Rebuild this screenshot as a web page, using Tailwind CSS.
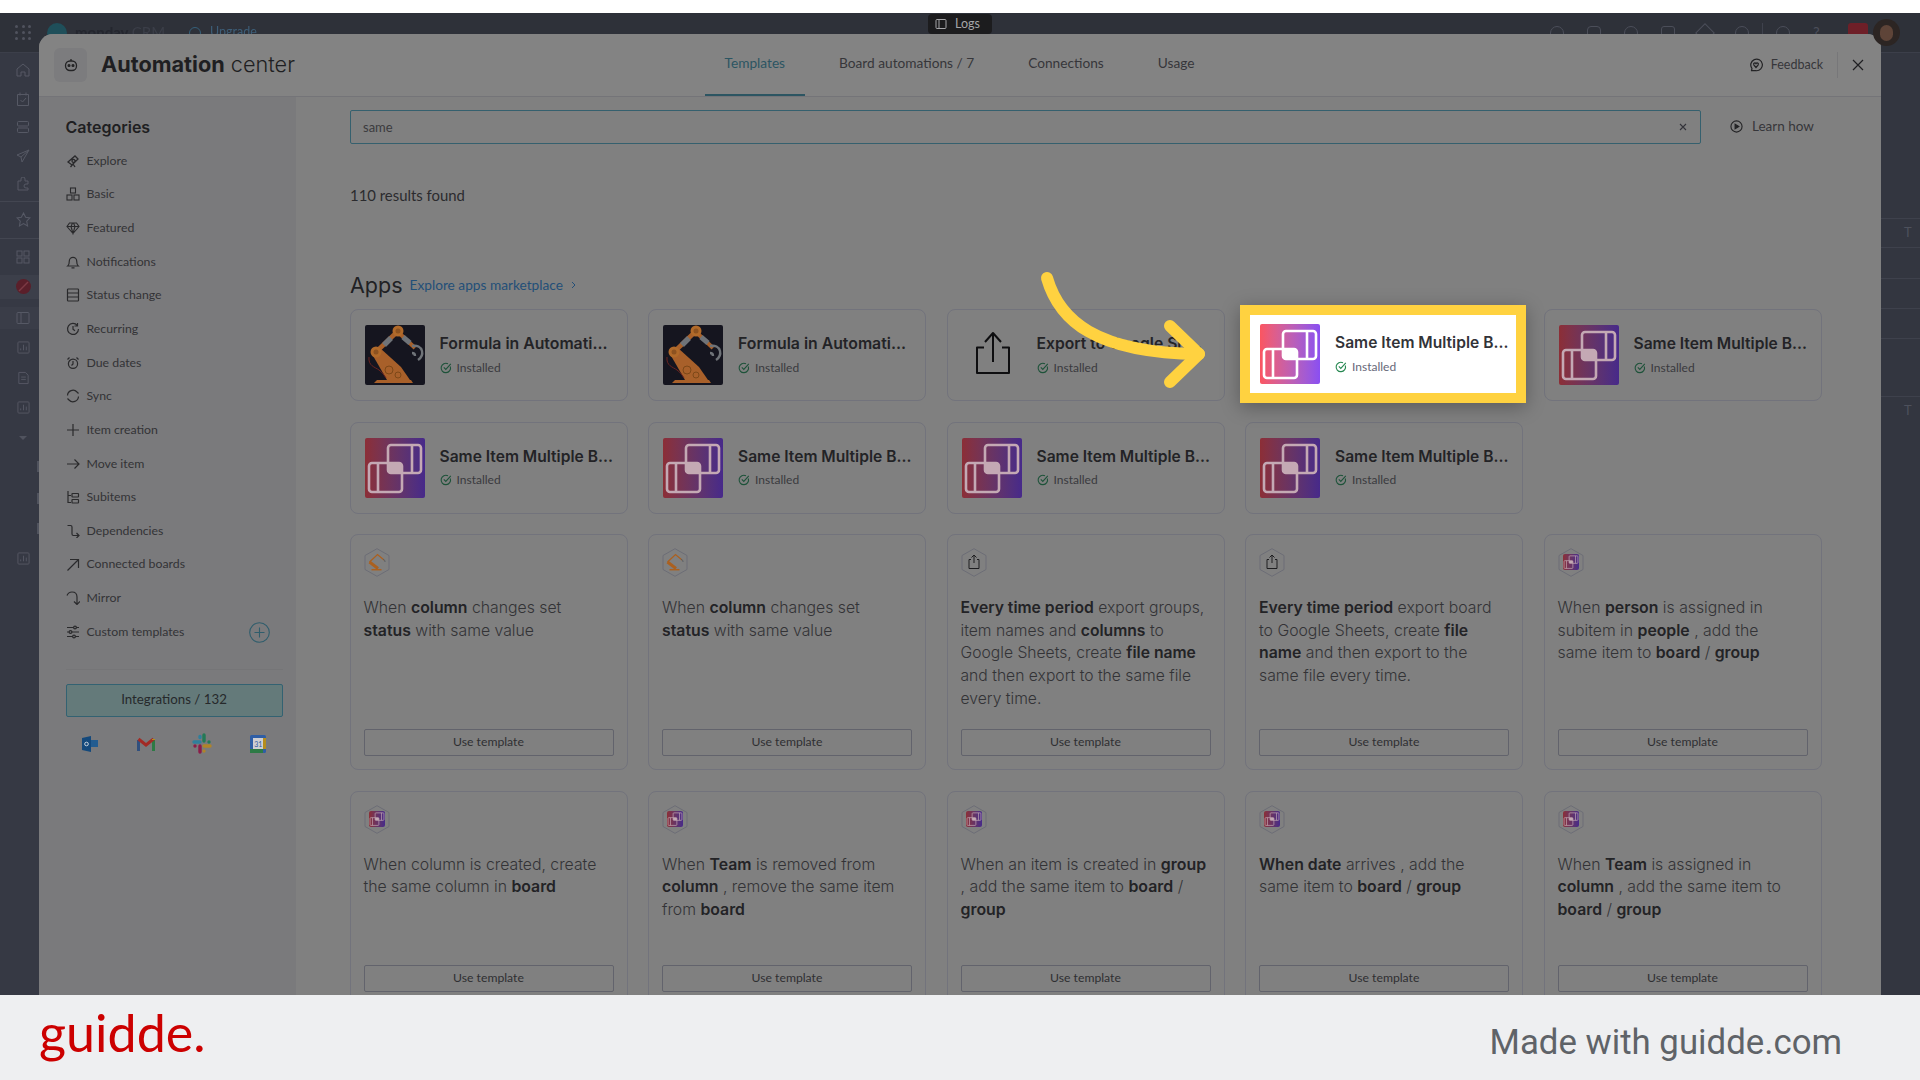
<!DOCTYPE html>
<html lang="en">
<head>
<meta charset="utf-8">
<title>Automation center</title>
<script src="https://cdn.jsdelivr.net/npm/@tailwindcss/browser@4"></script>
</head>
<body class="w-[1920px] h-[1080px] overflow-hidden bg-white flex flex-col font-['Lato',sans-serif]">
<svg class="hidden" width="0" height="0">
  <defs>
    <symbol id="same" viewBox="0 0 60 60">
      <rect x="23" y="7" width="33" height="28" rx="3" fill="none" stroke="currentColor" stroke-width="2.6"/>
      <rect x="4" y="25" width="33" height="29" rx="3" fill="none" stroke="currentColor" stroke-width="2.6"/>
      <path d="M47 7v28M13 25v29" stroke="currentColor" stroke-width="2.6" fill="none"/>
      <rect x="23" y="25" width="14" height="10" rx="2" fill="currentColor"/>
    </symbol>
    <symbol id="robot" viewBox="0 0 60 60">
      <rect width="60" height="60" rx="2" fill="#15151f"/>
      <path d="M9 58l3-3h34l2 3z" fill="#a8602a"/>
      <path d="M7 29l8-6 21 19 9 13H22z" fill="#a8602a"/>
      <path d="M12 26L32 7" stroke="#a8602a" stroke-width="4.500" fill="none"/>
      <path d="M19 20L26 13" stroke="#6f7378" stroke-width="5.500" fill="none"/>
      <path d="M33 7L50 23" stroke="#a8602a" stroke-width="4" fill="none"/>
      <path d="M38 12L45 18" stroke="#6f7378" stroke-width="5" fill="none"/>
      <circle cx="11" cy="27" r="5.500" fill="#b16a2a"/><circle cx="33" cy="6" r="5.500" fill="#b16a2a"/>
      <circle cx="11" cy="27" r="2.500" fill="#8d5220"/><circle cx="33" cy="6" r="2.500" fill="#8d5220"/>
      <circle cx="24" cy="45" r="4" fill="none" stroke="#7d4818"/><circle cx="33" cy="50" r="3" fill="none" stroke="#7d4818"/>
      <path d="M47 21c5-1 9 1 10 5s-1 7-4 9M47 28c2 0 3 1 3 3" stroke="#6f7378" stroke-width="2.400" fill="none"/>
      <path d="M4 32c-1 9 6 10 10 13s5 5 7 8" stroke="#6b2320" fill="none"/>
    </symbol>
    <symbol id="hex" viewBox="0 0 26 29">
      <path d="M13 .7l12 6.800v14L13 28.300 1 21.500V7.500z" fill="none" stroke="#6c6d76"/>
    </symbol>
    <symbol id="hexrobot" viewBox="0 0 26 29">
      <path d="M13 .7l12 6.800v14L13 28.300 1 21.500V7.500z" fill="none" stroke="#6c6d76"/>
      <path d="M5.500 14L13.500 6.500 20 12" fill="none" stroke="#ab601f" stroke-width="1.300"/>
      <path d="M5.500 14L14 20.500" fill="none" stroke="#ab601f" stroke-width="3"/>
      <path d="M7.500 21.700h10" fill="none" stroke="#ab601f" stroke-width="1.500"/>
      <path d="M19 11.500c1.500 0 2 1 2 2.500" fill="none" stroke="#5c5f63" stroke-width="1"/>
    </symbol>
    <symbol id="hexexport" viewBox="0 0 26 29">
      <path d="M13 .7l12 6.800v14L13 28.300 1 21.500V7.500z" fill="none" stroke="#6c6d76"/>
      <path d="M8 11.500h2M16 11.500h2M8 11.500v9h10v-9M13 15V7M10.500 9.500L13 7l2.500 2.500" fill="none" stroke="#1e1e20"/>
    </symbol>
    <symbol id="check" viewBox="0 0 12 12">
      <path d="M10.300 4.500A4.700 4.700 0 1 1 8 1.800" fill="none" stroke="currentColor" stroke-width="1.100"/>
      <path d="M3.800 5.400L5.800 7.400 10.800 1.900" fill="none" stroke="currentColor" stroke-width="1.100"/>
    </symbol>
  </defs>
</svg>

<div class="h-[13px] bg-white shrink-0"></div>

<div class="relative h-[982px] shrink-0 overflow-hidden bg-[#333640]">
  <!-- dimmed monday app behind the modal -->
  <div class="h-[40px] bg-[#2e3139] border-b border-[#3c3f4a] flex items-center text-[#4b4e59] relative">
    <div class="ml-[15px] grid grid-cols-3 gap-[3px] w-[17px]">
      <i class="w-[3px] h-[3px] bg-[#50535e] rounded-full"></i><i class="w-[3px] h-[3px] bg-[#50535e] rounded-full"></i><i class="w-[3px] h-[3px] bg-[#50535e] rounded-full"></i>
      <i class="w-[3px] h-[3px] bg-[#50535e] rounded-full"></i><i class="w-[3px] h-[3px] bg-[#50535e] rounded-full"></i><i class="w-[3px] h-[3px] bg-[#50535e] rounded-full"></i>
      <i class="w-[3px] h-[3px] bg-[#50535e] rounded-full"></i><i class="w-[3px] h-[3px] bg-[#50535e] rounded-full"></i><i class="w-[3px] h-[3px] bg-[#50535e] rounded-full"></i>
    </div>
    <div class="w-[20px] h-[20px] ml-[15px] rounded-full bg-[#1f4f5a]"></div>
    <span class="ml-[8px] text-[15px] font-bold text-[#24262e] blur-[0.5px] whitespace-nowrap">monday <span class="font-normal text-[#3b3e48]">CRM</span></span>
    <span class="ml-[24px] w-[12px] h-[12px] rounded-full border border-[#35607a]"></span>
    <span class="ml-[9px] text-[12.500px] text-[#3d5e78] blur-[0.5px]">Upgrade</span>
    <div class="ml-auto flex items-center h-full pr-[20px]">
      <div class="flex items-center gap-[23px] text-[#4b4e59] mr-[21px]">
        <i class="w-[14px] h-[14px] rounded-t-full border border-current"></i>
        <i class="w-[14px] h-[14px] rounded-[4px] border border-current"></i>
        <i class="w-[14px] h-[14px] rounded-full border border-current"></i>
        <i class="w-[14px] h-[14px] rounded-[3px] border border-current"></i>
        <i class="w-[14px] h-[14px] rotate-45 border border-current"></i>
        <i class="w-[14px] h-[14px] rounded-full border border-current"></i>
        <i class="-mx-[10px] w-[1px] h-[20px] bg-[#3f424d]"></i>
        <i class="w-[14px] h-[14px] rounded-full border border-current"></i>
        <span class="w-[14px] text-[15px] leading-none">?</span>
      </div>
      <div class="w-[20px] h-[20px] rounded-[3px] bg-[#6e1f28]"></div>
      <div class="relative z-10 w-[27px] h-[27px] ml-[5px] rounded-full bg-[#2c2523] flex items-center justify-center"><i class="block w-[13px] h-[16px] rounded-full bg-[#5e4438]"></i></div>
    </div>
  </div>
  <div class="flex h-[942px]">
    <div class="w-[39px] shrink-0 bg-[#363944] text-[#565965] flex flex-col items-center pl-[7px]">
      <div class="h-[28.500px] mt-[3px] flex items-center"><svg class="w-[14px] h-[14px]" viewBox="0 0 14 14" fill="none" stroke="currentColor"><path d="M1 6l6-5 6 5v7H9V9H5v4H1z"/></svg></div>
      <div class="h-[28.500px] flex items-center"><svg class="w-[14px] h-[14px]" viewBox="0 0 14 14" fill="none" stroke="currentColor"><path d="M1.500 2.500h11v11h-11zM4 .5v3M10 .5v3M4.500 8l2 2 3.500-4"/></svg></div>
      <div class="h-[28.500px] flex items-center"><svg class="w-[14px] h-[14px]" viewBox="0 0 14 14" fill="none" stroke="currentColor"><rect x="1.500" y="1.500" width="11" height="4.500" rx="1"/><rect x="1.500" y="8" width="11" height="4.500" rx="1"/></svg></div>
      <div class="h-[28.500px] flex items-center"><svg class="w-[14px] h-[14px]" viewBox="0 0 14 14" fill="none" stroke="currentColor"><path d="M13 1L1 6l4 2 1 5zM5 8l8-7"/></svg></div>
      <div class="h-[28.500px] flex items-center"><svg class="w-[14px] h-[14px]" viewBox="0 0 14 14" fill="none" stroke="currentColor"><path d="M2 4h3V2a2 2 0 0 1 4 0v2h3v3h-2a2 2 0 0 0 0 4h2v2H2z"/></svg></div>
      <div class="w-[39px] -ml-[7px] mt-[2px] border-t border-[#434651]"></div>
      <div class="h-[36px] flex items-center"><svg class="w-[15px] h-[15px]" viewBox="0 0 14 14" fill="none" stroke="currentColor"><path d="M7 1l2 4 4 .5-3 3 .8 4.500L7 10.800 3.200 13 4 8.500l-3-3L5 5z"/></svg></div>
      <div class="w-[39px] -ml-[7px] border-t border-[#434651]"></div>
      <div class="h-[36px] flex items-center"><svg class="w-[14px] h-[14px]" viewBox="0 0 14 14" fill="none" stroke="currentColor"><rect x="1" y="1" width="5" height="5"/><rect x="8" y="1" width="5" height="5"/><rect x="1" y="8" width="5" height="5"/><rect x="8" y="8" width="5" height="5"/></svg></div>
      <div class="h-[24px] w-[39px] -ml-[7px] pl-[7px] flex items-center justify-center bg-[#3c3f4a]"><svg class="w-[15px] h-[15px]" viewBox="0 0 15 15"><circle cx="7.500" cy="7.500" r="7.500" fill="#5a1f2a"/><path d="M3 12L12 3" stroke="#7d3a44" stroke-width="1.500"/></svg></div>
      <div class="h-[22px] mt-[8px] w-[39px] -ml-[7px] pl-[7px] flex items-center justify-center bg-[#3a3d48]"><svg class="w-[14px] h-[14px]" viewBox="0 0 14 14" fill="none" stroke="currentColor"><rect x="1" y="1.500" width="12" height="11" rx="1"/><path d="M5 1.500v11"/></svg></div>
      <div class="h-[30px] mt-[4px] flex items-center"><svg class="w-[13px] h-[13px]" viewBox="0 0 14 14" fill="none" stroke="currentColor"><rect x="1" y="1" width="12" height="12" rx="1"/><path d="M4 10V8M7 10V4M10 10V6"/></svg></div>
      <div class="h-[30px] flex items-center"><svg class="w-[13px] h-[14px]" viewBox="0 0 14 14" fill="none" stroke="currentColor"><path d="M2 1h7l3 3v9H2zM4.500 6h5M4.500 8.500h5"/></svg></div>
      <div class="h-[30px] flex items-center"><svg class="w-[13px] h-[13px]" viewBox="0 0 14 14" fill="none" stroke="currentColor"><rect x="1" y="1" width="12" height="12" rx="1"/><path d="M4 10V8M7 10V4M10 10V6"/></svg></div>
      <div class="h-[30px] flex items-center"><i class="block border-x-[4px] border-t-[4px] border-x-transparent border-t-[#50535e]"></i></div>
      <div class="h-[91px] w-full">
        <i class="block ml-auto mt-[8px] w-[2px] h-[11px] bg-[#50535e]"></i>
        <i class="block ml-auto mt-[21px] w-[2px] h-[11px] bg-[#50535e]"></i>
        <i class="block ml-auto mt-[19px] w-[2px] h-[11px] bg-[#50535e]"></i>
      </div>
      <div class="h-[30px] flex items-center"><svg class="w-[13px] h-[13px]" viewBox="0 0 14 14" fill="none" stroke="currentColor"><rect x="1" y="1" width="12" height="12" rx="1"/><path d="M4 10V8M7 10V4M10 10V6"/></svg></div>
    </div>
    <div class="flex-1"></div>
    <div class="w-[39px] shrink-0 pt-[165px] text-[#4e515c] text-[13px] overflow-hidden">
      <div class="h-[29px] border-t border-[#3e414c] pl-[23px] flex items-center">T</div>
      <div class="h-[31px] border-t border-[#3e414c]"></div>
      <div class="h-[30px] border-t border-[#3e414c]"></div>
      <div class="h-[30px] border-t border-[#3e414c]"></div>
      <div class="h-[58px] border-t border-[#3e414c]"></div>
      <div class="h-[29px] border-t border-[#3e414c] pl-[23px] flex items-center">T</div>
    </div>
  </div>

  <!-- Logs tab -->
  <div class="absolute left-[928px] top-[1px] z-20 w-[64px] h-[20px] rounded-[4px] bg-[#1c1c1e] flex items-center pl-[7px] gap-[8px] text-[#a5a5a8] text-[12.500px]">
    <svg class="w-[12px] h-[12px]" viewBox="0 0 12 12" fill="none" stroke="currentColor"><rect x="1" y="1.500" width="10" height="9" rx="1"/><path d="M4 1.500v9"/></svg>
    <span>Logs</span>
  </div>

  <!-- Modal -->
  <div class="absolute left-[39px] top-[21px] w-[1842px] h-[1000px] rounded-t-[14px] overflow-hidden bg-[#808080] flex flex-col">
    <header class="h-[63px] shrink-0 bg-[#838383] border-b border-[#747478] flex items-center">
      <div class="w-[665.500px] shrink-0 flex items-center">
        <div class="ml-[15px] w-[33px] h-[34px] rounded-[6px] bg-[#7c7c7e] flex items-center justify-center text-[#242426]">
          <svg class="w-[14px] h-[14px]" viewBox="0 0 14 14" fill="none" stroke="currentColor" stroke-width="1.300"><rect x="1.500" y="3" width="11" height="9.500" rx="4.500"/><path d="M7 3V1"/><circle cx="5" cy="7.500" r=".9" fill="currentColor"/><circle cx="9" cy="7.500" r=".9" fill="currentColor"/></svg>
        </div>
        <div class="ml-[14px] -mt-[2px] text-[21.700px] text-[#1f1f22] font-['Inter',sans-serif] whitespace-nowrap"><span class="font-bold">Automation</span> <span class="font-light">center</span></div>
      </div>
      <nav class="flex gap-[14px] h-full text-[13.700px] text-[#36363a]">
        <div class="px-[20px] pb-[2px] h-full flex items-center border-b-[2px] border-[#2c5562] text-[#2c5562]">Templates</div>
        <div class="px-[20px] pb-[4px] h-full flex items-center">Board automations / 7</div>
        <div class="px-[20px] pb-[4px] h-full flex items-center">Connections</div>
        <div class="px-[20px] pb-[4px] h-full flex items-center">Usage</div>
      </nav>
      <div class="ml-auto flex items-center h-full">
        <svg class="w-[14px] h-[14px] text-[#232325]" viewBox="0 0 14 14" fill="none" stroke="currentColor" stroke-width="1.200"><path d="M2.500 12.500L3 10.500A5.800 5.800 0 1 1 7 12.700H2.500z"/><path d="M7 9.500L4.800 6.800c-.8-1.500 1.300-2.600 2.200-1.200.9-1.400 3-.3 2.200 1.200z"/></svg>
        <span class="ml-[8px] text-[12.500px] text-[#36363a]">Feedback</span>
        <i class="ml-[14px] w-[1px] h-[26px] bg-[#777779]"></i>
        <svg class="ml-[14px] mr-[17px] w-[12px] h-[12px] text-[#1f1f22]" viewBox="0 0 12 12" fill="none" stroke="currentColor" stroke-width="1.200"><path d="M1 1l10 10M11 1L1 11"/></svg>
      </div>
    </header>
    <div class="flex flex-1 min-h-0">
      <aside class="w-[257px] shrink-0 bg-[#7a7a7c] pl-[26.500px] pr-[13.500px] text-[12.300px] text-[#333336]">
        <h2 class="mt-[18px] h-[24px] flex items-center text-[16px] font-semibold text-[#1f1f22] font-['Inter',sans-serif]">Categories</h2>
        <ul class="mt-[5px]">
          <li class="h-[33.670px] flex items-center gap-[7px]"><svg class="w-[14px] h-[14px]" viewBox="0 0 14 14" fill="none" stroke="#2a2a2c" stroke-width="1.300"><path d="M2 8l7-6 3 3-6 6zM7 10l-2.500 3M7 10l2 3M9 7a1.500 1.500 0 1 1 0-.1"/></svg>Explore</li>
          <li class="h-[33.670px] flex items-center gap-[7px]"><svg class="w-[14px] h-[14px]" viewBox="0 0 14 14" fill="none" stroke="#2a2a2c" stroke-width="1.100"><rect x="4.500" y="1" width="5" height="5"/><rect x="1" y="8" width="5" height="5"/><rect x="8" y="8" width="5" height="5"/></svg>Basic</li>
          <li class="h-[33.670px] flex items-center gap-[7px]"><svg class="w-[14px] h-[14px]" viewBox="0 0 14 14" fill="none" stroke="#2a2a2c" stroke-width="1.100"><path d="M3.500 2h7L13 5.500 7 12.500 1 5.500zM1 5.500h12M5 5.500L7 12.500 9 5.500 7.500 2M5 5.500L6.500 2"/></svg>Featured</li>
          <li class="h-[33.670px] flex items-center gap-[7px]"><svg class="w-[14px] h-[14px]" viewBox="0 0 14 14" fill="none" stroke="#2a2a2c" stroke-width="1.200"><path d="M1.800 11h10.400c-1.200-1-1.500-2.300-1.500-5A3.700 3.700 0 0 0 3.300 6c0 2.700-.3 4-1.500 5zM5.500 12.800h3"/></svg>Notifications</li>
          <li class="h-[33.670px] flex items-center gap-[7px]"><svg class="w-[14px] h-[14px]" viewBox="0 0 14 14" fill="none" stroke="#2a2a2c" stroke-width="1.200"><rect x="1.500" y="1" width="11" height="12" rx=".8"/><path d="M1.500 5h11M1.500 9h11"/></svg>Status change</li>
          <li class="h-[33.670px] flex items-center gap-[7px]"><svg class="w-[14px] h-[14px]" viewBox="0 0 14 14" fill="none" stroke="#2a2a2c" stroke-width="1.200"><path d="M11.300 3.500A5.500 5.500 0 1 0 12.500 7M11.500 1v3H8.500M7 4v3.300l2 1.500"/></svg>Recurring</li>
          <li class="h-[33.670px] flex items-center gap-[7px]"><svg class="w-[14px] h-[14px]" viewBox="0 0 14 14" fill="none" stroke="#2a2a2c" stroke-width="1.200"><circle cx="7" cy="7.800" r="4.600"/><path d="M1.500 3.500L3.500 1.500M12.500 3.500L10.500 1.500M7 5v3l-1.500 1.500"/></svg>Due dates</li>
          <li class="h-[33.670px] flex items-center gap-[7px]"><svg class="w-[14px] h-[14px]" viewBox="0 0 14 14" fill="none" stroke="#2a2a2c" stroke-width="1.200"><path d="M1.500 6.500A5.500 5.500 0 0 1 11 3l1.500 1.500M12.500 7.500A5.500 5.500 0 0 1 3 11L1.500 9.500"/></svg>Sync</li>
          <li class="h-[33.670px] flex items-center gap-[7px]"><svg class="w-[14px] h-[14px]" viewBox="0 0 14 14" fill="none" stroke="#2a2a2c" stroke-width="1.200"><path d="M7 1v12M1 7h12"/></svg>Item creation</li>
          <li class="h-[33.670px] flex items-center gap-[7px]"><svg class="w-[14px] h-[14px]" viewBox="0 0 14 14" fill="none" stroke="#2a2a2c" stroke-width="1.200"><path d="M1 7h12M8.500 2.500L13 7l-4.500 4.500"/></svg>Move item</li>
          <li class="h-[33.670px] flex items-center gap-[7px]"><svg class="w-[14px] h-[14px]" viewBox="0 0 14 14" fill="none" stroke="#2a2a2c" stroke-width="1.200"><path d="M2 1v11.500h3M2 5.500h3"/><rect x="6" y="3.500" width="6.500" height="3.500" rx=".5"/><rect x="6" y="9.500" width="6.500" height="3.500" rx=".5"/></svg>Subitems</li>
          <li class="h-[33.670px] flex items-center gap-[7px]"><svg class="w-[14px] h-[14px]" viewBox="0 0 14 14" fill="none" stroke="#2a2a2c" stroke-width="1.200"><path d="M1.500 1.500H4.500c1 0 1.500.5 1.500 1.500v7c0 1 .5 1.500 1.500 1.500H13M10.500 9l2.500 2.500-2.500 2.500"/></svg>Dependencies</li>
          <li class="h-[33.670px] flex items-center gap-[7px]"><svg class="w-[14px] h-[14px]" viewBox="0 0 14 14" fill="none" stroke="#2a2a2c" stroke-width="1.200"><path d="M1.500 12.500L12.500 1.500M4 1.500h8.500V10"/></svg>Connected boards</li>
          <li class="h-[33.670px] flex items-center gap-[7px]"><svg class="w-[14px] h-[14px]" viewBox="0 0 14 14" fill="none" stroke="#2a2a2c" stroke-width="1.200"><path d="M1 4.500C2 2 4 1 6 1c3 0 5 2 5 5v7M8 10.500l3 3 3-3"/></svg>Mirror</li>
          <li class="h-[33.670px] flex items-center gap-[7px]"><svg class="w-[14px] h-[14px]" viewBox="0 0 14 14" fill="none" stroke="#2a2a2c" stroke-width="1.200"><path d="M1 2.500h12M1 7h12M1 11.500h12"/><circle cx="9" cy="2.500" r="1.400" fill="#7a7a7c"/><circle cx="4.500" cy="7" r="1.400" fill="#7a7a7c"/><circle cx="8" cy="11.500" r="1.400" fill="#7a7a7c"/></svg>Custom templates
            <svg class="ml-auto mr-[13px] w-[21px] h-[21px]" viewBox="0 0 21 21" fill="none" stroke="#2f5d6c" stroke-width="1.100"><circle cx="10.500" cy="10.500" r="9.800"/><path d="M10.500 5.500v10M5.500 10.500h10"/></svg></li>
        </ul>
        <div class="mt-[20px] border-t-[1.500px] border-[#757577]"></div>
        <div class="mt-[14px] h-[33px] rounded-[2px] bg-[#647a7a] border border-[#336272] flex items-center justify-center text-[13.300px] text-[#26292b]">Integrations / 132</div>
        <div class="mt-[15px] h-[24px] pl-[14px] pr-[15px] flex justify-between">
          <svg class="w-[20px] h-[24px]" viewBox="0 0 20 24"><path d="M2 6l9-2v16l-9-2z" fill="#14497c"/><rect x="11" y="8" width="7" height="7" fill="#235c90"/><circle cx="6.500" cy="12" r="1.800" fill="none" stroke="#c8d3dd"/></svg>
          <svg class="w-[20px] h-[24px]" viewBox="0 0 20 24" fill="none" stroke-width="3"><path d="M2.500 19V8" stroke="#31507e"/><path d="M17.500 19V8" stroke="#2d7a45"/><path d="M2.500 7l7.500 6 7.500-6" stroke="#a22b25"/><path d="M17.500 7v1" stroke="#b58d1d"/></svg>
          <svg class="w-[20px] h-[24px]" viewBox="0 0 20 24" fill="none" stroke-width="3.400" stroke-linecap="round"><path d="M2 10h6M8 4.500v1" stroke="#2f7f9c"/><path d="M12 3v6M17 10h0" stroke="#237a56"/><path d="M12 14h6M12 19v0" stroke="#b08428"/><path d="M8 14v6M3 14h0" stroke="#8b1c49"/></svg>
          <svg class="w-[20px] h-[24px]" viewBox="0 0 20 24"><rect x="2" y="3" width="16" height="18" rx="1.500" fill="#2f5ea5"/><rect x="5" y="6" width="10" height="11" fill="#cfcfd2"/><rect x="15" y="6" width="3" height="11" fill="#b58d1d"/><rect x="2" y="17" width="13" height="4" fill="#2d7a45"/><text x="6.200" y="15" font-size="7" fill="#2f5ea5">31</text></svg>
        </div>
      </aside>

      <main class="flex-1 min-w-0 pl-[54px] text-[#2b2b2e]">
        <div class="mt-[13px] flex items-center">
          <div class="w-[1351px] h-[34px] rounded-[2px] border border-[#35606e] flex items-center pl-[12px] pr-[13px] text-[13px] text-[#3b3b3e]">
            <span class="mt-[1px]">same</span>
            <svg class="ml-auto w-[8px] h-[8px] text-[#33333a]" viewBox="0 0 8 8" fill="none" stroke="currentColor" stroke-width="1.100"><path d="M1 1l6 6M7 1L1 7"/></svg>
          </div>
          <div class="ml-[29px] -mt-[2px] flex items-center gap-[9px] text-[13.500px] text-[#36363a]">
            <svg class="w-[13px] h-[13px]" viewBox="0 0 14 14" fill="none" stroke="#232325" stroke-width="1.200"><circle cx="7" cy="7" r="6"/><path d="M5.500 4.500l4 2.500-4 2.500z" fill="#232325"/></svg>
            <span>Learn how</span>
          </div>
        </div>
        <div class="mt-[41px] h-[20px] flex items-center text-[14.900px] text-[#2b2b2e]">110 results found</div>
        <div class="mt-[65px] h-[30px] flex items-center">
          <span class="text-[21.500px] text-[#212124] font-['Inter',sans-serif]">Apps</span>
          <span class="ml-[7px] text-[13.700px] text-[#234f78]">Explore apps marketplace</span>
          <svg class="ml-[8px] w-[5px] h-[8px] text-[#234f78]" viewBox="0 0 5 8" fill="none" stroke="currentColor"><path d="M1 1l3 3-3 3"/></svg>
        </div>

        <div class="mt-[9px] -ml-[0.500px] w-[1472px] grid grid-cols-5 gap-x-[20.500px] gap-y-[20.500px] font-['Inter',sans-serif]">
          <!-- App cards -->
          <div class="h-[92px] rounded-[8px] border border-[#72737c] flex items-center pl-[14px] gap-[15px]">
            <svg class="w-[60px] h-[60px] shrink-0"><use href="#robot"/></svg>
            <div><div class="text-[15.800px] font-semibold text-[#232326] whitespace-nowrap -mt-[1px]">Formula in Automati...</div><div class="mt-[3px] flex items-center gap-[5px] font-['Lato',sans-serif] text-[12px] text-[#3a3a3e]"><svg class="w-[12px] h-[12px] text-[#1d5239]"><use href="#check"/></svg>Installed</div></div>
          </div>
          <div class="h-[92px] rounded-[8px] border border-[#72737c] flex items-center pl-[14px] gap-[15px]">
            <svg class="w-[60px] h-[60px] shrink-0"><use href="#robot"/></svg>
            <div><div class="text-[15.800px] font-semibold text-[#232326] whitespace-nowrap -mt-[1px]">Formula in Automati...</div><div class="mt-[3px] flex items-center gap-[5px] font-['Lato',sans-serif] text-[12px] text-[#3a3a3e]"><svg class="w-[12px] h-[12px] text-[#1d5239]"><use href="#check"/></svg>Installed</div></div>
          </div>
          <div class="h-[92px] rounded-[8px] border border-[#72737c] flex items-center pl-[14px] gap-[15px]">
            <svg class="w-[60px] h-[60px] shrink-0" viewBox="0 0 60 60" fill="none" stroke="#0e0e10" stroke-width="2" stroke-linejoin="round"><path d="M22 22.500h-7V48h32V22.500h-7M31 37V8M23 17l8-9 8 9"/></svg>
            <div><div class="text-[15.700px] font-semibold text-[#232326] whitespace-nowrap -mt-[1px]">Export to Google Sh...</div><div class="mt-[3px] flex items-center gap-[5px] font-['Lato',sans-serif] text-[12px] text-[#3a3a3e]"><svg class="w-[12px] h-[12px] text-[#1d5239]"><use href="#check"/></svg>Installed</div></div>
          </div>
          <!-- highlighted step target -->
          <div class="relative z-10 -ml-[5px] -mr-[3px] -mt-[4px] -mb-[2px] h-[98px] bg-white border-[10px] border-[#ffd240] shadow-[0_4px_18px_rgba(0,0,0,0.3)] flex items-center pl-[10px] gap-[15px]">
            <div class="w-[60px] h-[60px] shrink-0 rounded-[2px] bg-linear-to-r from-[#fb5560] to-[#8a4ef2] text-white"><svg class="w-[60px] h-[60px]"><use href="#same"/></svg></div>
            <div><div class="text-[15.600px] font-semibold text-[#323338] whitespace-nowrap -mt-[1px]">Same Item Multiple B...</div><div class="mt-[3px] flex items-center gap-[5px] font-['Lato',sans-serif] text-[12px] text-[#676879]"><svg class="w-[12px] h-[12px] text-[#258750]"><use href="#check"/></svg>Installed</div></div>
          </div>
          <div class="h-[92px] rounded-[8px] border border-[#72737c] flex items-center pl-[14px] gap-[15px]">
            <div class="w-[60px] h-[60px] shrink-0 rounded-[2px] bg-linear-to-r from-[#8c2e36] to-[#47298a] text-[#c4a9b4]"><svg class="w-[60px] h-[60px]"><use href="#same"/></svg></div>
            <div><div class="text-[15.600px] font-semibold text-[#232326] whitespace-nowrap -mt-[1px]">Same Item Multiple B...</div><div class="mt-[3px] flex items-center gap-[5px] font-['Lato',sans-serif] text-[12px] text-[#3a3a3e]"><svg class="w-[12px] h-[12px] text-[#1d5239]"><use href="#check"/></svg>Installed</div></div>
          </div>

          <div class="h-[92px] rounded-[8px] border border-[#72737c] flex items-center pl-[14px] gap-[15px]">
            <div class="w-[60px] h-[60px] shrink-0 rounded-[2px] bg-linear-to-r from-[#8c2e36] to-[#47298a] text-[#c4a9b4]"><svg class="w-[60px] h-[60px]"><use href="#same"/></svg></div>
            <div><div class="text-[15.600px] font-semibold text-[#232326] whitespace-nowrap -mt-[1px]">Same Item Multiple B...</div><div class="mt-[3px] flex items-center gap-[5px] font-['Lato',sans-serif] text-[12px] text-[#3a3a3e]"><svg class="w-[12px] h-[12px] text-[#1d5239]"><use href="#check"/></svg>Installed</div></div>
          </div>
          <div class="h-[92px] rounded-[8px] border border-[#72737c] flex items-center pl-[14px] gap-[15px]">
            <div class="w-[60px] h-[60px] shrink-0 rounded-[2px] bg-linear-to-r from-[#8c2e36] to-[#47298a] text-[#c4a9b4]"><svg class="w-[60px] h-[60px]"><use href="#same"/></svg></div>
            <div><div class="text-[15.600px] font-semibold text-[#232326] whitespace-nowrap -mt-[1px]">Same Item Multiple B...</div><div class="mt-[3px] flex items-center gap-[5px] font-['Lato',sans-serif] text-[12px] text-[#3a3a3e]"><svg class="w-[12px] h-[12px] text-[#1d5239]"><use href="#check"/></svg>Installed</div></div>
          </div>
          <div class="h-[92px] rounded-[8px] border border-[#72737c] flex items-center pl-[14px] gap-[15px]">
            <div class="w-[60px] h-[60px] shrink-0 rounded-[2px] bg-linear-to-r from-[#8c2e36] to-[#47298a] text-[#c4a9b4]"><svg class="w-[60px] h-[60px]"><use href="#same"/></svg></div>
            <div><div class="text-[15.600px] font-semibold text-[#232326] whitespace-nowrap -mt-[1px]">Same Item Multiple B...</div><div class="mt-[3px] flex items-center gap-[5px] font-['Lato',sans-serif] text-[12px] text-[#3a3a3e]"><svg class="w-[12px] h-[12px] text-[#1d5239]"><use href="#check"/></svg>Installed</div></div>
          </div>
          <div class="h-[92px] rounded-[8px] border border-[#72737c] flex items-center pl-[14px] gap-[15px]">
            <div class="w-[60px] h-[60px] shrink-0 rounded-[2px] bg-linear-to-r from-[#8c2e36] to-[#47298a] text-[#c4a9b4]"><svg class="w-[60px] h-[60px]"><use href="#same"/></svg></div>
            <div><div class="text-[15.600px] font-semibold text-[#232326] whitespace-nowrap -mt-[1px]">Same Item Multiple B...</div><div class="mt-[3px] flex items-center gap-[5px] font-['Lato',sans-serif] text-[12px] text-[#3a3a3e]"><svg class="w-[12px] h-[12px] text-[#1d5239]"><use href="#check"/></svg>Installed</div></div>
          </div>
          <div></div>

          <!-- Template cards row 1 -->
          <div class="h-[236px] rounded-[8px] border border-[#72737c] flex flex-col px-[13px] pt-[13px] pb-[13px]">
            <svg class="w-[26px] h-[29px]"><use href="#hexrobot"/></svg>
            <p class="mt-[20px] text-[15.800px] leading-[22.700px] font-light text-[#333336] whitespace-nowrap">When <b class="font-semibold text-[#232326]">column</b> changes set<br><b class="font-semibold text-[#232326]">status</b> with same value</p>
            <div class="mt-auto h-[27px] rounded-[2px] border border-[#62636c] flex items-center justify-center font-['Lato',sans-serif] text-[12.200px] text-[#2f2f32]">Use template</div>
          </div>
          <div class="h-[236px] rounded-[8px] border border-[#72737c] flex flex-col px-[13px] pt-[13px] pb-[13px]">
            <svg class="w-[26px] h-[29px]"><use href="#hexrobot"/></svg>
            <p class="mt-[20px] text-[15.800px] leading-[22.700px] font-light text-[#333336] whitespace-nowrap">When <b class="font-semibold text-[#232326]">column</b> changes set<br><b class="font-semibold text-[#232326]">status</b> with same value</p>
            <div class="mt-auto h-[27px] rounded-[2px] border border-[#62636c] flex items-center justify-center font-['Lato',sans-serif] text-[12.200px] text-[#2f2f32]">Use template</div>
          </div>
          <div class="h-[236px] rounded-[8px] border border-[#72737c] flex flex-col px-[13px] pt-[13px] pb-[13px]">
            <svg class="w-[26px] h-[29px]"><use href="#hexexport"/></svg>
            <p class="mt-[20px] text-[15.700px] leading-[22.700px] font-light text-[#333336] whitespace-nowrap"><b class="font-semibold text-[#232326]">Every time period</b> export groups,<br>item names and <b class="font-semibold text-[#232326]">columns</b> to<br>Google Sheets, create <b class="font-semibold text-[#232326]">file name</b><br>and then export to the same file<br>every time.</p>
            <div class="mt-auto h-[27px] rounded-[2px] border border-[#62636c] flex items-center justify-center font-['Lato',sans-serif] text-[12.200px] text-[#2f2f32]">Use template</div>
          </div>
          <div class="h-[236px] rounded-[8px] border border-[#72737c] flex flex-col px-[13px] pt-[13px] pb-[13px]">
            <svg class="w-[26px] h-[29px]"><use href="#hexexport"/></svg>
            <p class="mt-[20px] text-[15.800px] leading-[22.700px] font-light text-[#333336] whitespace-nowrap"><b class="font-semibold text-[#232326]">Every time period</b> export board<br>to Google Sheets, create <b class="font-semibold text-[#232326]">file</b><br><b class="font-semibold text-[#232326]">name</b> and then export to the<br>same file every time.</p>
            <div class="mt-auto h-[27px] rounded-[2px] border border-[#62636c] flex items-center justify-center font-['Lato',sans-serif] text-[12.200px] text-[#2f2f32]">Use template</div>
          </div>
          <div class="h-[236px] rounded-[8px] border border-[#72737c] flex flex-col px-[13px] pt-[13px] pb-[13px]">
            <div class="relative w-[26px] h-[29px]"><svg class="w-[26px] h-[29px]"><use href="#hex"/></svg><div class="absolute left-[5px] top-[6px] w-[16px] h-[16px] rounded-[2px] bg-linear-to-r from-[#8c2e36] to-[#47298a] text-[#c4a9b4]"><svg class="w-[16px] h-[16px]"><use href="#same"/></svg></div></div>
            <p class="mt-[20px] text-[15.800px] leading-[22.700px] font-light text-[#333336] whitespace-nowrap">When <b class="font-semibold text-[#232326]">person</b> is assigned in<br>subitem in <b class="font-semibold text-[#232326]">people</b> , add the<br>same item to <b class="font-semibold text-[#232326]">board</b> / <b class="font-semibold text-[#232326]">group</b></p>
            <div class="mt-auto h-[27px] rounded-[2px] border border-[#62636c] flex items-center justify-center font-['Lato',sans-serif] text-[12.200px] text-[#2f2f32]">Use template</div>
          </div>

          <!-- Template cards row 2 -->
          <div class="h-[215px] rounded-[8px] border border-[#72737c] flex flex-col px-[13px] pt-[13px] pb-[13px]">
            <div class="relative w-[26px] h-[29px]"><svg class="w-[26px] h-[29px]"><use href="#hex"/></svg><div class="absolute left-[5px] top-[6px] w-[16px] h-[16px] rounded-[2px] bg-linear-to-r from-[#8c2e36] to-[#47298a] text-[#c4a9b4]"><svg class="w-[16px] h-[16px]"><use href="#same"/></svg></div></div>
            <p class="mt-[20px] text-[15.800px] leading-[22.700px] font-light text-[#333336] whitespace-nowrap">When column is created, create<br>the same column in <b class="font-semibold text-[#232326]">board</b></p>
            <div class="mt-auto h-[27px] rounded-[2px] border border-[#62636c] flex items-center justify-center font-['Lato',sans-serif] text-[12.200px] text-[#2f2f32]">Use template</div>
          </div>
          <div class="h-[215px] rounded-[8px] border border-[#72737c] flex flex-col px-[13px] pt-[13px] pb-[13px]">
            <div class="relative w-[26px] h-[29px]"><svg class="w-[26px] h-[29px]"><use href="#hex"/></svg><div class="absolute left-[5px] top-[6px] w-[16px] h-[16px] rounded-[2px] bg-linear-to-r from-[#8c2e36] to-[#47298a] text-[#c4a9b4]"><svg class="w-[16px] h-[16px]"><use href="#same"/></svg></div></div>
            <p class="mt-[20px] text-[15.800px] leading-[22.700px] font-light text-[#333336] whitespace-nowrap">When <b class="font-semibold text-[#232326]">Team</b> is removed from<br><b class="font-semibold text-[#232326]">column</b> , remove the same item<br>from <b class="font-semibold text-[#232326]">board</b></p>
            <div class="mt-auto h-[27px] rounded-[2px] border border-[#62636c] flex items-center justify-center font-['Lato',sans-serif] text-[12.200px] text-[#2f2f32]">Use template</div>
          </div>
          <div class="h-[215px] rounded-[8px] border border-[#72737c] flex flex-col px-[13px] pt-[13px] pb-[13px]">
            <div class="relative w-[26px] h-[29px]"><svg class="w-[26px] h-[29px]"><use href="#hex"/></svg><div class="absolute left-[5px] top-[6px] w-[16px] h-[16px] rounded-[2px] bg-linear-to-r from-[#8c2e36] to-[#47298a] text-[#c4a9b4]"><svg class="w-[16px] h-[16px]"><use href="#same"/></svg></div></div>
            <p class="mt-[20px] text-[15.900px] leading-[22.700px] font-light text-[#333336] whitespace-nowrap">When an item is created in <b class="font-semibold text-[#232326]">group</b><br>, add the same item to <b class="font-semibold text-[#232326]">board</b> /<br><b class="font-semibold text-[#232326]">group</b></p>
            <div class="mt-auto h-[27px] rounded-[2px] border border-[#62636c] flex items-center justify-center font-['Lato',sans-serif] text-[12.200px] text-[#2f2f32]">Use template</div>
          </div>
          <div class="h-[215px] rounded-[8px] border border-[#72737c] flex flex-col px-[13px] pt-[13px] pb-[13px]">
            <div class="relative w-[26px] h-[29px]"><svg class="w-[26px] h-[29px]"><use href="#hex"/></svg><div class="absolute left-[5px] top-[6px] w-[16px] h-[16px] rounded-[2px] bg-linear-to-r from-[#8c2e36] to-[#47298a] text-[#c4a9b4]"><svg class="w-[16px] h-[16px]"><use href="#same"/></svg></div></div>
            <p class="mt-[20px] text-[15.800px] leading-[22.700px] font-light text-[#333336] whitespace-nowrap"><b class="font-semibold text-[#232326]">When date</b> arrives , add the<br>same item to <b class="font-semibold text-[#232326]">board</b> / <b class="font-semibold text-[#232326]">group</b></p>
            <div class="mt-auto h-[27px] rounded-[2px] border border-[#62636c] flex items-center justify-center font-['Lato',sans-serif] text-[12.200px] text-[#2f2f32]">Use template</div>
          </div>
          <div class="h-[215px] rounded-[8px] border border-[#72737c] flex flex-col px-[13px] pt-[13px] pb-[13px]">
            <div class="relative w-[26px] h-[29px]"><svg class="w-[26px] h-[29px]"><use href="#hex"/></svg><div class="absolute left-[5px] top-[6px] w-[16px] h-[16px] rounded-[2px] bg-linear-to-r from-[#8c2e36] to-[#47298a] text-[#c4a9b4]"><svg class="w-[16px] h-[16px]"><use href="#same"/></svg></div></div>
            <p class="mt-[20px] text-[15.800px] leading-[22.700px] font-light text-[#333336] whitespace-nowrap">When <b class="font-semibold text-[#232326]">Team</b> is assigned in<br><b class="font-semibold text-[#232326]">column</b> , add the same item to<br><b class="font-semibold text-[#232326]">board</b> / <b class="font-semibold text-[#232326]">group</b></p>
            <div class="mt-auto h-[27px] rounded-[2px] border border-[#62636c] flex items-center justify-center font-['Lato',sans-serif] text-[12.200px] text-[#2f2f32]">Use template</div>
          </div>
        </div>
      </main>
    </div>
  </div>

  <!-- guide arrow annotation -->
  <svg class="absolute left-[1035px] top-[250px] z-20 w-[180px] h-[130px]" viewBox="0 0 180 130" fill="none" stroke="#ffd240" stroke-width="12" stroke-linecap="round" stroke-linejoin="round">
    <path d="M12 15C24 57 60 90 164 91"/>
    <path d="M135 63L164 91 135 119"/>
  </svg>
</div>

<footer class="h-[85px] shrink-0 bg-[#eeeff1] flex items-center justify-between pl-[39px] pr-[78px]">
  <span class="text-[52px] leading-none text-[#cc0000] font-['Lato',sans-serif] -mt-[12px]">guidde.</span>
  <span class="text-[34.800px] text-[#5f6368] font-['Roboto',sans-serif] mt-[9px]">Made with guidde.com</span>
</footer>
</body>
</html>
